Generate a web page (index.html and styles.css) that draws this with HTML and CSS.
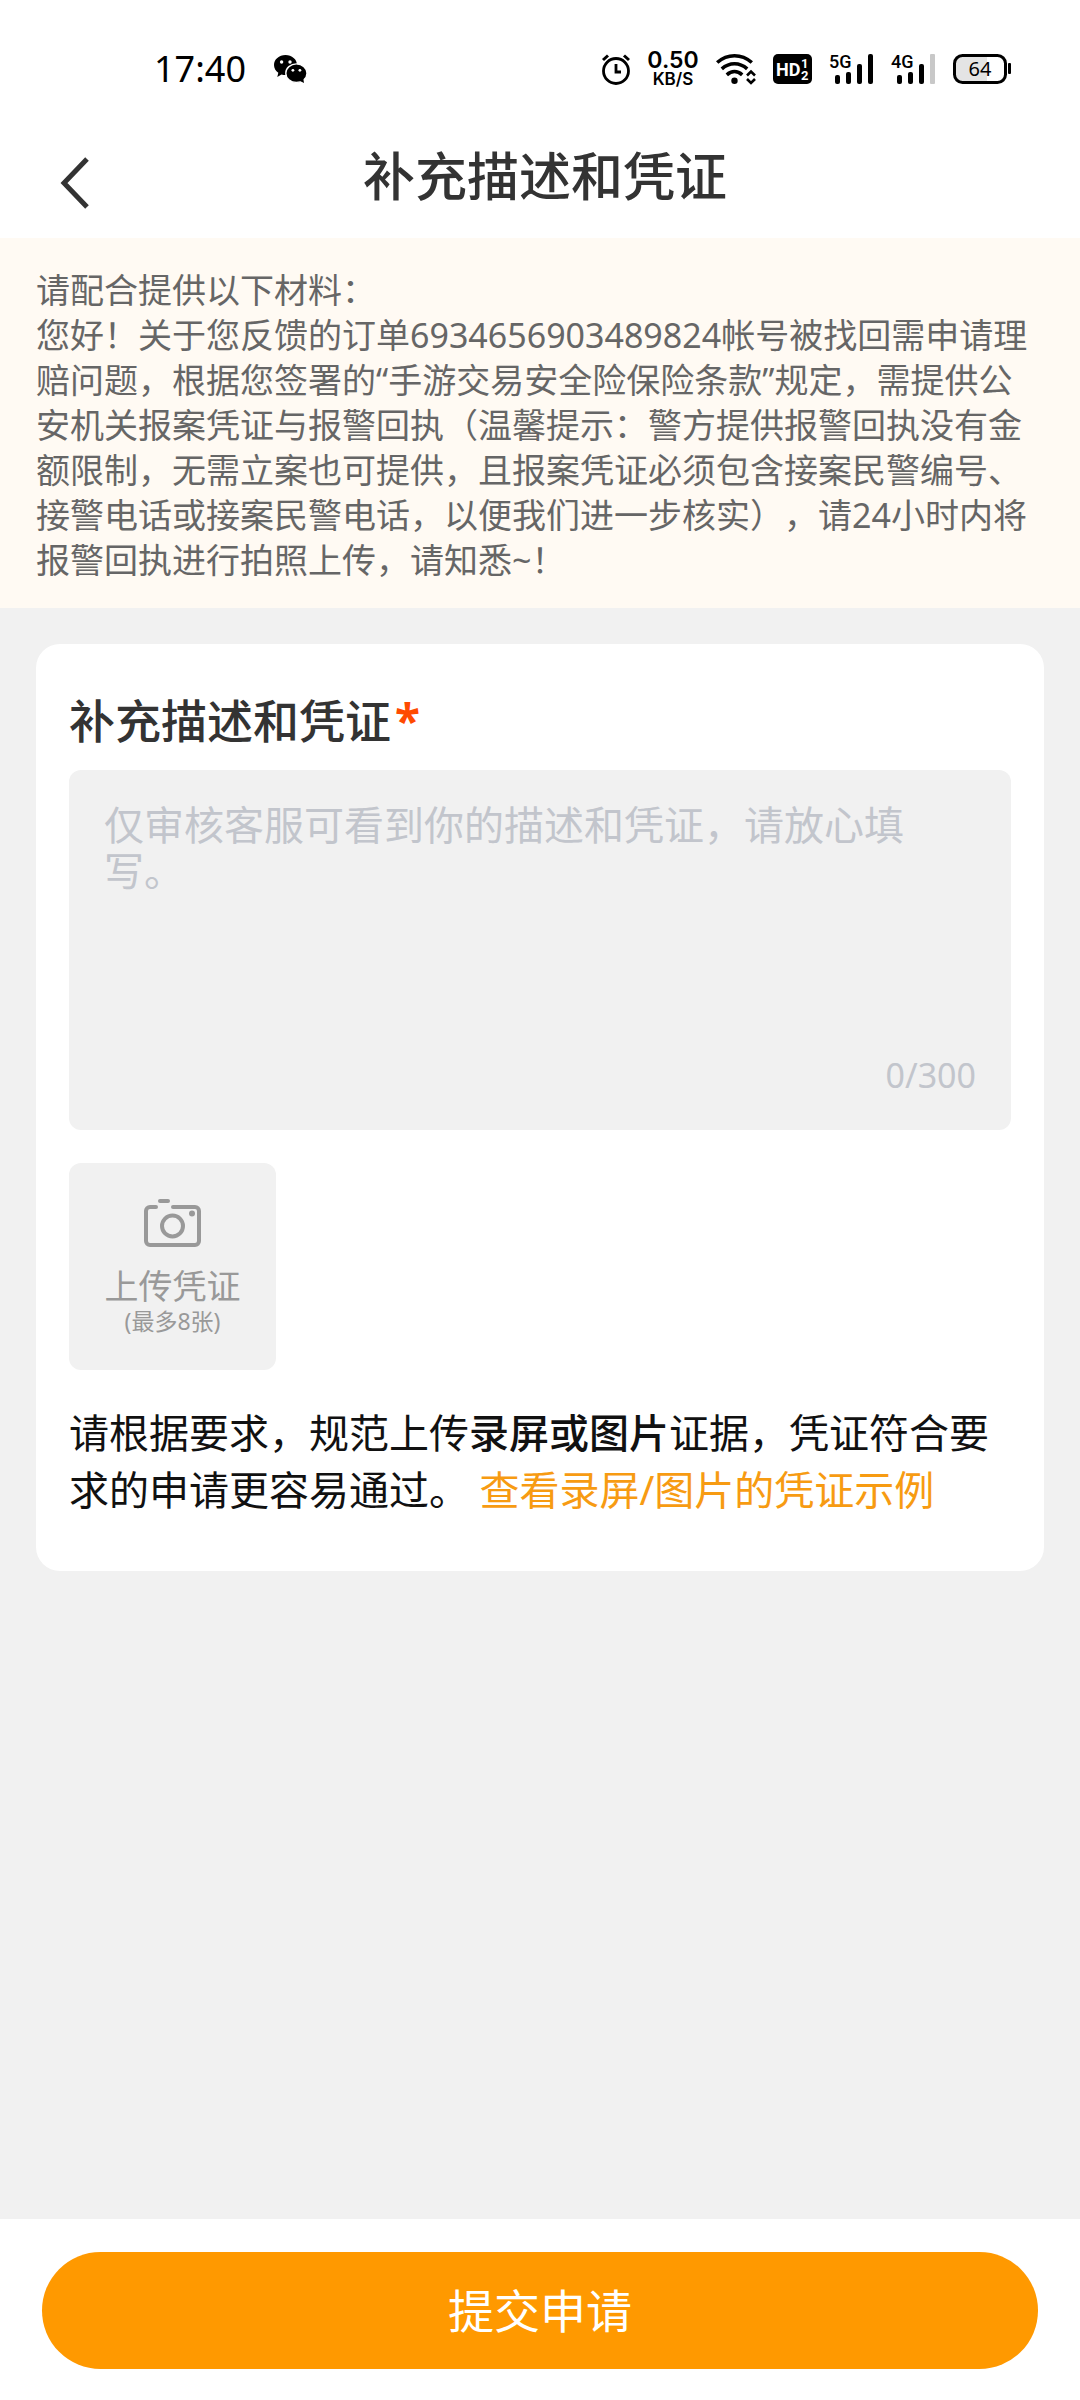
FILE: index.html
```html
<!DOCTYPE html>
<html lang="zh-CN">
<head>
  <meta charset="utf-8">
  <meta name="viewport" content="width=device-width, initial-scale=1">
  <title>补充描述和凭证</title>
  <link rel="stylesheet" href="styles.css">
</head>
<body>
  <div class="page">
    <div class="status">
      <div class="status-group">
        <span class="clock">17:40</span>
        <svg class="icon" width="33" height="28" viewBox="0 0 33 28" aria-hidden="true">
          <path d="M11.500 0C5.100 0 0 4.400 0 10c0 3.200 1.700 6 4.300 7.800L3.300 22l4.200-2.600c1.400.4 2.700.6 4 .6C17.900 20 23 15.600 23 10S17.900 0 11.500 0Z"/>
          <ellipse cx="22.400" cy="18.200" rx="10.600" ry="9.300" stroke="#fff" stroke-width="1.400"/>
          <path d="M25.500 25.800l4.500 2.200-.7-4.500Z"/>
          <g fill="#fff"><circle cx="7.600" cy="7" r="1.700"/><circle cx="16" cy="7" r="1.700"/><circle cx="18.900" cy="15.300" r="1.400"/><circle cx="25.900" cy="15.300" r="1.400"/></g>
        </svg>
      </div>
      <div class="status-group">
        <svg class="icon" width="28" height="32" viewBox="0 0 28 32" fill="none" stroke="#000" aria-hidden="true">
          <circle cx="14" cy="18" r="12.500" stroke-width="2.800"/>
          <path d="M14 11v8h5" stroke-width="2.800"/>
          <path d="M1 7l5-4.500M27 7l-5-4.500" stroke-width="3"/>
        </svg>
        <div class="speed"><span class="speed-value">0.50</span><span class="speed-unit">KB/S</span></div>
        <svg class="icon" width="39" height="30" viewBox="0 0 39 30" fill="none" stroke="#000" aria-hidden="true">
          <path d="M1.200 8.500C11.500-.6 25.500-.6 35.800 8.500" stroke-width="3.600"/>
          <path d="M5.800 14.800C13.500 8 23.500 8 31.200 14.800" stroke-width="3.600"/>
          <path d="M10.800 20.800C15.500 16.600 21.500 16.600 26.200 20.800" stroke-width="3.600"/>
          <circle cx="18.500" cy="26.800" r="3.200" fill="#000" stroke="none"/>
          <path d="M31 21.500l4-4 4 4M31 25l4 4 4-4" stroke-width="2.600"/>
        </svg>
        <svg class="icon" width="39" height="30" viewBox="0 0 39 30" aria-hidden="true">
          <rect width="39" height="30" rx="5"/>
          <g fill="#fff" class="badge-text">
            <text x="3" y="22" font-size="18">HD</text>
            <text x="28" y="14" font-size="13">1</text>
            <text x="28" y="26" font-size="13">2</text>
          </g>
        </svg>
        <svg class="icon" width="43" height="30" viewBox="0 0 43 30" aria-hidden="true">
          <text class="network-text" x="-1" y="14" font-size="18">5G</text>
          <rect x="5" y="21" width="5" height="9" rx="2"/>
          <rect x="16" y="18" width="5" height="12" rx="2"/>
          <rect x="27" y="10" width="5" height="20" rx="2"/>
          <rect x="38" y="0" width="5" height="30" rx="2"/>
        </svg>
        <svg class="icon" width="44" height="30" viewBox="0 0 44 30" aria-hidden="true">
          <text class="network-text" x="0" y="14" font-size="18">4G</text>
          <rect x="6" y="21" width="5" height="9" rx="2"/>
          <rect x="17" y="18" width="5" height="12" rx="2"/>
          <rect x="28" y="10" width="5" height="20" rx="2"/>
          <rect x="39" y="0" width="5" height="30" rx="1" fill="#c8c8c8"/>
        </svg>
        <svg class="icon" width="58" height="30" viewBox="0 0 58 30" aria-hidden="true">
          <path d="M8 3h26v24H8a5 5 0 0 1-5-5V8a5 5 0 0 1 5-5Z" fill="#e4e4e4"/>
          <rect x="1.500" y="1.500" width="51" height="27" rx="8" fill="none" stroke="#000" stroke-width="3"/>
          <rect x="55" y="9" width="3" height="11" rx="1"/>
          <text class="battery-text" x="27" y="22" font-size="20" text-anchor="middle">64</text>
        </svg>
      </div>
    </div>

    <header class="nav">
      <button class="back" type="button" aria-label="返回">
        <svg class="icon" width="30" height="52" viewBox="0 0 30 52" fill="none" stroke="#333" stroke-width="5" aria-hidden="true">
          <path d="M27 2L4 26l23 24"/>
        </svg>
      </button>
      <h1 class="title">补充描述和凭证</h1>
    </header>

    <section class="notice">
      <p>请配合提供以下材料：</p>
      <p>您好！关于您反馈的订单6934656903489824帐号被找回需申请理赔问题，根据您签署的“手游交易安全险保险条款”规定，需提供公安机关报案凭证与报警回执（温馨提示：警方提供报警回执没有金额限制，无需立案也可提供，且报案凭证必须包含接案民警编号、接警电话或接案民警电话，以便我们进一步核实），请24小时内将报警回执进行拍照上传，请知悉~！</p>
    </section>

    <form class="form" id="claim">
      <div class="card">
        <label class="label" for="description">补充描述和凭证<span class="required">*</span></label>
        <div class="field">
          <textarea class="input" id="description" maxlength="300" placeholder="仅审核客服可看到你的描述和凭证，请放心填写。"></textarea>
          <span class="count">0/300</span>
        </div>
        <button class="upload" type="button">
          <svg class="icon" width="57" height="48" viewBox="0 0 57 48" fill="none" stroke="#999" stroke-width="4" stroke-linecap="round" aria-hidden="true">
            <path d="M16 2h8"/>
            <path d="M12 8H6a4 4 0 0 0-4 4v30a4 4 0 0 0 4 4h45a4 4 0 0 0 4-4V12a4 4 0 0 0-4-4H29"/>
            <circle cx="28.500" cy="27" r="10.500"/>
            <circle cx="48" cy="14.500" r="3" fill="#999" stroke="none"/>
          </svg>
          <span class="upload-title">上传凭证</span>
          <span class="upload-limit">(最多8张)</span>
        </button>
        <p class="hint">请根据要求，规范上传<strong>录屏或图片</strong>证据，凭证符合要求的申请更容易通过。 <a class="link" href="#example">查看录屏/图片的凭证示例</a></p>
      </div>
    </form>

    <footer class="footer">
      <button class="submit" type="submit" form="claim">提交申请</button>
    </footer>
  </div>
</body>
</html>
```
FILE: styles.css
```css
*,
*::before,
*::after {
  box-sizing: border-box;
}

body {
  margin: 0;
  background: #f1f1f1;
  color: #333;
  font-family: "Noto Sans", "Noto Sans CJK SC", sans-serif;
  text-spacing-trim: space-all;
}

h1,
p {
  margin: 0;
}

button,
textarea {
  margin: 0;
  padding: 0;
  border: 0;
  background: none;
  color: inherit;
  font: inherit;
}

.page {
  display: flex;
  flex-direction: column;
  min-height: 100vh;
}

.icon {
  display: block;
  flex: none;
  overflow: visible;
}

/* Status bar */
.status {
  display: flex;
  align-items: center;
  justify-content: space-between;
  height: 138px;
  padding: 0 69px 0 154px;
  background: #fff;
  color: #000;
}

.status-group {
  display: flex;
  align-items: center;
  gap: 18px;
}

.status-group:first-child {
  gap: 28px;
}

.clock {
  font-size: 36px;
  line-height: 48px;
}

.speed {
  display: flex;
  flex-direction: column;
  align-items: center;
  width: 50px;
  font-family: Inter, sans-serif;
  font-weight: 600;
}

.speed-value {
  font-size: 23px;
  line-height: 20px;
}

.speed-unit {
  font-size: 17px;
  line-height: 18px;
}

.badge-text {
  font-family: Roboto, sans-serif;
  font-weight: 700;
}

.network-text {
  font-family: Roboto, sans-serif;
  font-weight: 500;
}

.battery-text {
  font-family: "Noto Sans", sans-serif;
}

/* Title bar */
.nav {
  display: grid;
  grid-template-columns: 100px 1fr 90px;
  align-items: center;
  height: 100px;
  padding-bottom: 10px;
  background: #fff;
}

.back {
  justify-self: end;
  padding: 0 10px;
}

.title {
  padding-bottom: 14px;
  font-size: 52px;
  font-weight: 500;
  line-height: 76px;
  text-align: center;
}

/* Notice */
.notice {
  padding: 30px 36px 25px;
  background: #fffaf3;
  color: #666;
  font-size: 34px;
  line-height: 45px;
}

/* Form card */
.form {
  flex: 1;
  padding: 36px;
}

.card {
  padding: 44px 33px 53px;
  border-radius: 24px;
  background: #fff;
}

.label {
  display: block;
  margin-bottom: 18px;
  font-size: 46px;
  font-weight: 500;
  line-height: 64px;
}

.required {
  margin-left: 4px;
  color: #ff4a00;
  font-weight: 700;
}

.field {
  display: flex;
  flex-direction: column;
  margin-bottom: 33px;
  padding: 32px 35px;
  border-radius: 12px;
  background: #f1f1f1;
}

.input {
  display: block;
  width: 100%;
  height: 250px;
  outline: 0;
  font-size: 40px;
  line-height: 46px;
  resize: none;
}

.input::placeholder {
  color: #c2c5cc;
  opacity: 1;
}

.count {
  align-self: flex-end;
  color: #c2c5cc;
  font-size: 34px;
  line-height: 46px;
}

.upload {
  display: flex;
  flex-direction: column;
  align-items: center;
  width: 207px;
  height: 207px;
  margin-bottom: 34px;
  padding-top: 36px;
  border-radius: 12px;
  background: #f1f1f1;
  color: #999;
}

.upload-title {
  margin-top: 16px;
  font-size: 34px;
  line-height: 46px;
}

.upload-limit {
  font-size: 23px;
  line-height: 24px;
}

.hint {
  color: #111;
  font-size: 40px;
  line-height: 57px;
}

.hint strong {
  font-weight: 500;
}

.link {
  color: #f79b12;
  text-decoration: none;
}

/* Submit bar */
.footer {
  padding: 33px 42px 31px;
  background: #fff;
}

.submit {
  display: block;
  width: 100%;
  height: 117px;
  padding-bottom: 6px;
  border-radius: 60px;
  background: #ff9900;
  color: #fff;
  font-size: 46px;
}
```
